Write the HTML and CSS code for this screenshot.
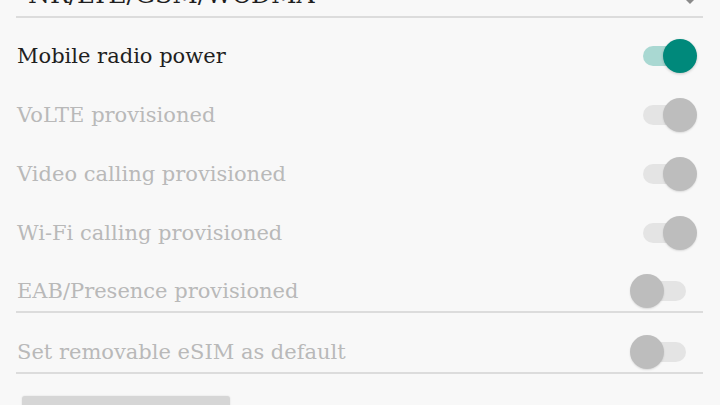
FILE: index.html
```html
<!DOCTYPE html>
<html lang="en">
<head>
  <meta charset="UTF-8">
  <meta name="viewport" content="width=device-width, initial-scale=1.0">
  <title>Phone info</title>
  <link rel="stylesheet" href="styles.css">
</head>
<body>
  <div class="settings">
    <div class="spinner">
      <span class="spinner-value">NR/LTE/GSM/WCDMA</span>
      <span class="spinner-arrow"></span>
    </div>

    <div class="switch-row">
      <span class="label">Mobile radio power</span>
      <span class="switch on"><span class="track"></span><span class="thumb"></span></span>
    </div>
    <div class="switch-row disabled">
      <span class="label">VoLTE provisioned</span>
      <span class="switch on"><span class="track"></span><span class="thumb"></span></span>
    </div>
    <div class="switch-row disabled">
      <span class="label">Video calling provisioned</span>
      <span class="switch on"><span class="track"></span><span class="thumb"></span></span>
    </div>
    <div class="switch-row disabled">
      <span class="label">Wi-Fi calling provisioned</span>
      <span class="switch on"><span class="track"></span><span class="thumb"></span></span>
    </div>
    <div class="switch-row disabled divided">
      <span class="label">EAB/Presence provisioned</span>
      <span class="switch"><span class="track"></span><span class="thumb"></span></span>
    </div>
    <div class="switch-row disabled divided last">
      <span class="label">Set removable eSIM as default</span>
      <span class="switch"><span class="track"></span><span class="thumb"></span></span>
    </div>

    <button class="action" type="button"></button>
  </div>
</body>
</html>
```

FILE: styles.css
```css
body {
  margin: 0;
  background-color: #f8f8f8;
  font-family: "DejaVu Serif", "Liberation Serif", serif;
  overflow: hidden;
}

.settings {
  display: flex;
  flex-direction: column;
}

.spinner {
  height: 16px;
  margin: 0 17px 0 16px;
  border-bottom: 2px solid #dcdcdc;
  display: flex;
  align-items: flex-end;
  justify-content: space-between;
}

.spinner-value {
  font-size: 25px;
  color: #1f1f1f;
  margin: 0 0 9px 12px;
  line-height: 1;
}

.spinner-arrow {
  width: 0;
  height: 0;
  border-left: 5px solid transparent;
  border-right: 5px solid transparent;
  border-top: 5px solid #8a8a8a;
  margin: 0 8px 12px 0;
}

.switch-row {
  height: 42px;
  margin-top: 17px;
  padding: 0 23px 0 17px;
  display: flex;
  align-items: center;
  justify-content: space-between;
}

.switch-row.divided {
  margin-left: 16px;
  margin-right: 17px;
  padding: 0 6px 0 1px;
  border-bottom: 2px solid #dcdcdc;
  height: 40px;
}

.switch-row.last {
  margin-top: 19px;
}

.label {
  font-size: 21px;
  color: #1f1f1f;
}

.disabled .label {
  color: #b9b9b9;
}

/* switch: 43x20 track, 34px thumb that slides across it */
.switch {
  position: relative;
  width: 67px;
  height: 34px;
  flex: none;
}

.switch .track {
  position: absolute;
  left: 13px;
  top: 7px;
  width: 43px;
  height: 20px;
  border-radius: 10px;
  background-color: #e4e4e4;
}

.switch .thumb {
  position: absolute;
  left: 0;
  top: 0;
  width: 34px;
  height: 34px;
  border-radius: 50%;
  background-color: #bdbdbd;
  box-shadow: 0 1px 2px rgba(0, 0, 0, 0.12);
}

.switch.on .thumb {
  left: 33px;
}

.switch-row:not(.disabled) .switch.on .track {
  background-color: #a9d8d2;
}

.switch-row:not(.disabled) .switch.on .thumb {
  background-color: #00897b;
  box-shadow: 0 1px 3px rgba(0, 0, 0, 0.2);
}

.action {
  margin: 22px 0 0 22px;
  width: 208px;
  height: 40px;
  border: none;
  border-radius: 3px;
  background-color: #d6d6d6;
  box-shadow: 0 0 2px rgba(0, 0, 0, 0.12);
}
```
